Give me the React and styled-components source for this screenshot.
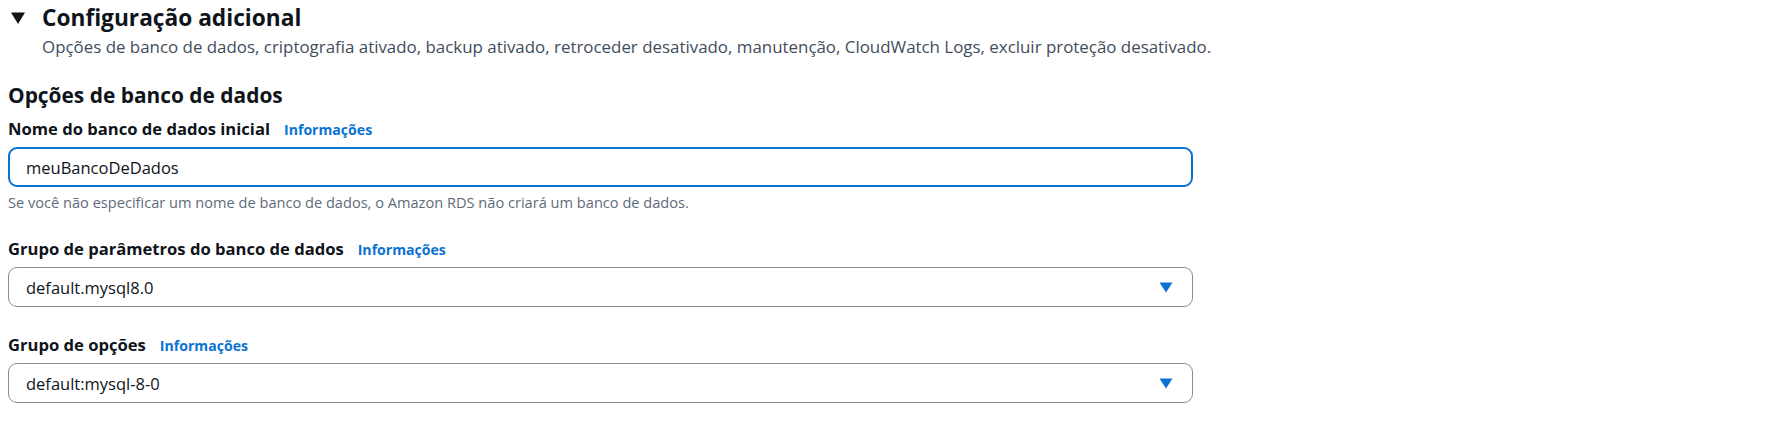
import React from "react";
import styled, { createGlobalStyle } from "styled-components";

const Global = createGlobalStyle`
  html, body { margin: 0; padding: 0; background: #ffffff; }
  body { font-family: "Open Sans", "Noto Sans", sans-serif; color: #0f141a; }
  * { box-sizing: border-box; }
`;

const Page = styled.div`
  width: 1765px;
  padding: 4px 0 0 8px;
`;

const HeaderRow = styled.div`
  display: flex;
  align-items: center;
  gap: 17px;
  padding-left: 3px;
`;

const Title = styled.h2`
  margin: 0;
  font-size: 22.7px;
  line-height: 28px;
  font-weight: 700;
  color: #0f141a;
`;

const Description = styled.p`
  margin: 4px 0 0 34px;
  font-size: 16.9px;
  line-height: 22px;
  color: #414d5c;
`;

const SectionTitle = styled.h3`
  margin: 24px 0 0 0;
  font-size: 20.9px;
  line-height: 26px;
  font-weight: 700;
  color: #0f141a;
`;

const Field = styled.div`
  width: 1185px;
  margin-top: ${(p) => p.$top}px;
`;

const LabelRow = styled.div`
  display: flex;
  align-items: baseline;
  gap: 14px;
  line-height: 22px;
`;

const Label = styled.span`
  font-size: 16.6px;
  font-weight: 700;
  color: #0f141a;
`;

const InfoLink = styled.a`
  font-size: 14.1px;
  font-weight: 700;
  color: #0972d3;
  text-decoration: none;
`;

const Control = styled.div`
  margin-top: 6px;
  height: 40px;
  display: flex;
  align-items: center;
  justify-content: space-between;
  padding: 0 19px 0 ${(p) => (p.$focused ? 16 : 17)}px;
  border: ${(p) => (p.$focused ? "2px solid #0972d3" : "1px solid #8c8c94")};
  border-radius: 9px;
  font-size: 16.5px;
  color: #0f141a;
`;

const Help = styled.div`
  margin-top: 5px;
  font-size: 14.6px;
  line-height: 20px;
  color: #5f6b7a;
`;

const Caret = () => (
  <svg width="14" height="11" viewBox="0 0 14 11">
    <path d="M0.5 0.5 H13.5 L7 10.5 Z" fill="#0972d3" />
  </svg>
);

const Expand = () => (
  <svg width="14" height="12" viewBox="0 0 14 12">
    <path d="M0 0.5 H14 L7 12 Z" fill="#0f141a" />
  </svg>
);

export default function App() {
  return (
    <Page>
      <Global />
      <HeaderRow>
        <Expand />
        <Title>Configuração adicional</Title>
      </HeaderRow>
      <Description>
        Opções de banco de dados, criptografia ativado, backup ativado, retroceder desativado, manutenção, CloudWatch Logs, excluir proteção desativado.
      </Description>
      <SectionTitle>Opções de banco de dados</SectionTitle>
      <Field $top={10}>
        <LabelRow>
          <Label>Nome do banco de dados inicial</Label>
          <InfoLink href="#">Informações</InfoLink>
        </LabelRow>
        <Control $focused>meuBancoDeDados</Control>
        <Help>Se você não especificar um nome de banco de dados, o Amazon RDS não criará um banco de dados.</Help>
      </Field>
      <Field $top={26}>
        <LabelRow>
          <Label>Grupo de parâmetros do banco de dados</Label>
          <InfoLink href="#">Informações</InfoLink>
        </LabelRow>
        <Control>
          default.mysql8.0
          <Caret />
        </Control>
      </Field>
      <Field $top={27}>
        <LabelRow>
          <Label>Grupo de opções</Label>
          <InfoLink href="#">Informações</InfoLink>
        </LabelRow>
        <Control>
          default:mysql-8-0
          <Caret />
        </Control>
      </Field>
    </Page>
  );
}
